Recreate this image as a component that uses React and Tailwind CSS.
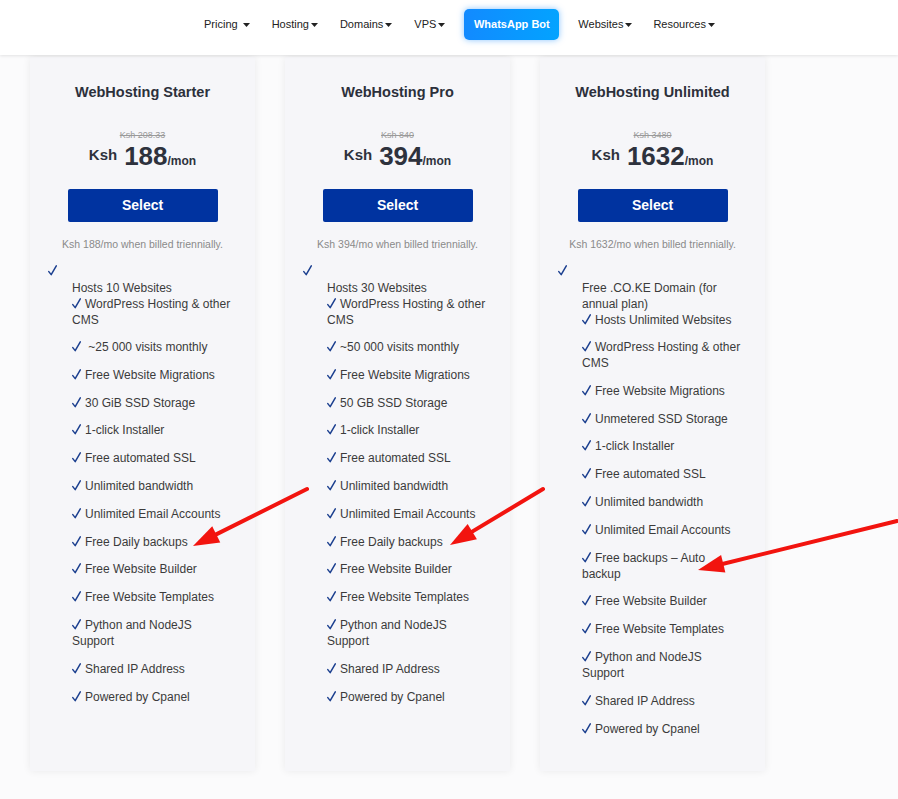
import React from 'react';

const navItems = ['Pricing', 'Hosting', 'Domains', 'VPS'];
const navItems2 = ['Websites', 'Resources'];

const plans = [
  {
    name: 'WebHosting Starter',
    old: 'Ksh 208.33',
    price: '188',
    billed: 'Ksh 188/mo when billed triennially.',
    first: ['Hosts 10 Websites', 'WordPress Hosting & other CMS'],
    features: [
      '\u00a0~25 000 visits monthly',
      'Free Website Migrations',
      '30 GiB SSD Storage',
      '1-click Installer',
      'Free automated SSL',
      'Unlimited bandwidth',
      'Unlimited Email Accounts',
      'Free Daily backups',
      'Free Website Builder',
      'Free Website Templates',
      'Python and NodeJS Support',
      'Shared IP Address',
      'Powered by Cpanel',
    ],
  },
  {
    name: 'WebHosting Pro',
    old: 'Ksh 840',
    price: '394',
    billed: 'Ksh 394/mo when billed triennially.',
    first: ['Hosts 30 Websites', 'WordPress Hosting & other CMS'],
    features: [
      '~50 000 visits monthly',
      'Free Website Migrations',
      '50 GB SSD Storage',
      '1-click Installer',
      'Free automated SSL',
      'Unlimited bandwidth',
      'Unlimited Email Accounts',
      'Free Daily backups',
      'Free Website Builder',
      'Free Website Templates',
      'Python and NodeJS Support',
      'Shared IP Address',
      'Powered by Cpanel',
    ],
  },
  {
    name: 'WebHosting Unlimited',
    old: 'Ksh 3480',
    price: '1632',
    billed: 'Ksh 1632/mo when billed triennially.',
    first: ['Free .CO.KE Domain (for annual plan)', 'Hosts Unlimited Websites'],
    features: [
      'WordPress Hosting & other CMS',
      'Free Website Migrations',
      'Unmetered SSD Storage',
      '1-click Installer',
      'Free automated SSL',
      'Unlimited bandwidth',
      'Unlimited Email Accounts',
      'Free backups \u2013 Auto backup',
      'Free Website Builder',
      'Free Website Templates',
      'Python and NodeJS Support',
      'Shared IP Address',
      'Powered by Cpanel',
    ],
  },
];

const arrows = [
  { x1: 307, y1: 489, x2: 193, y2: 546 },
  { x1: 543, y1: 489, x2: 450, y2: 545 },
  { x1: 897, y1: 521, x2: 698, y2: 570 },
];

const Caret = () => (
  <svg width="7" height="4" viewBox="0 0 7 4" className="ml-[2px] mt-[1px]">
    <path d="M0 0h7L3.5 4z" fill="#222" />
  </svg>
);

// checkmark drawn to match the thin-left / heavy-right tick of the reference
const Check = () => (
  <svg width="9" height="11" viewBox="0 0 9 11" className="inline-block align-[-1px] mr-[4px]">
    <path d="M0.8 6.6 L3.2 9.6 L8.3 0.8" fill="none" stroke="#1b3f8f" strokeWidth="1.5" strokeLinecap="round" strokeLinejoin="round" />
  </svg>
);

const Arrow = ({ x1, y1, x2, y2 }) => {
  const dx = x2 - x1;
  const dy = y2 - y1;
  const len = Math.hypot(dx, dy);
  const ux = dx / len;
  const uy = dy / len;
  const hl = 26;
  const hw = 9;
  const bx = x2 - ux * hl;
  const by = y2 - uy * hl;
  const pts = [
    [x2, y2],
    [bx - uy * hw, by + ux * hw],
    [bx + uy * hw, by - ux * hw],
  ]
    .map((p) => p.join(','))
    .join(' ');
  return (
    <g>
      <line x1={x1} y1={y1} x2={bx + ux * 4} y2={by + uy * 4} stroke="#f2140f" strokeWidth="4" strokeLinecap="round" />
      <polygon points={pts} fill="#f2140f" />
    </g>
  );
};

const PlanCard = ({ plan }) => (
  <div className="w-[225px] bg-[#f6f6f9] shadow-[0_0_8px_rgba(0,0,0,0.07)] pt-[27px] pb-[23px] flex flex-col">
    <h3 className="text-center text-[14.5px] leading-[16px] font-bold text-[#2c303b]">{plan.name}</h3>
    <div className="mt-[30px] text-center text-[9px] leading-[11px] text-[#9a9a9a] line-through">{plan.old}</div>
    <div className="text-center font-bold text-[#2e323d] leading-[28px] h-[28px]">
      <span className="text-[15px] align-[5px] mr-[7px]">Ksh</span>
      <span className="text-[26px]">{plan.price}</span>
      <span className="text-[12px]">/mon</span>
    </div>
    <button className="mx-auto mt-[20px] w-[150px] h-[33px] bg-[#0033a0] rounded-[2px] text-white text-[14px] font-bold">
      Select
    </button>
    <p className="mt-[16px] text-center text-[10.5px] leading-[12px] text-[#8a8a8a]">{plan.billed}</p>
    <div className="mt-[13px] pl-[18px] text-[12px] leading-[16px]">
      <Check />
    </div>
    <ul className="mt-[1px] pl-[42px] w-[204px] text-[12px] leading-[16px] text-[#3b3b3b]">
      <li className="mb-[11px]">
        {plan.first[0]}
        <br />
        <Check />
        {plan.first[1]}
      </li>
      {plan.features.map((f, i) => (
        <li key={i} className="mb-[11.8px]">
          <Check />
          {f}
        </li>
      ))}
    </ul>
  </div>
);

export default function App() {
  return (
    <div className="relative w-[898px] min-h-[799px] bg-[#fbfbfc] font-['Liberation_Sans',Arial,sans-serif] overflow-hidden">
      <header className="relative z-10 h-[55px] bg-white shadow-[0_1px_3px_rgba(0,0,0,0.1)] flex items-start pt-[9px] pl-[204px] text-[11px] text-[#222]">
        <nav className="flex items-center h-[31px]">
          {navItems.map((n) => (
            <a key={n} className={n === 'VPS' ? 'flex items-center mr-[19px]' : 'flex items-center mr-[22px]'}>
              {n}
              {n === 'Pricing' && <span className="w-[3px]" />}
              <Caret />
            </a>
          ))}
          <a className="mr-[19px] w-[95px] h-[31px] rounded-[5px] bg-gradient-to-r from-[#128aff] to-[#03a3ff] text-white font-bold flex items-center justify-center shadow-[0_0_6px_rgba(20,140,255,0.5)]">
            WhatsApp Bot
          </a>
          {navItems2.map((n) => (
            <a key={n} className="flex items-center mr-[21px]">
              {n}
              <Caret />
            </a>
          ))}
        </nav>
      </header>
      <main className="flex items-stretch gap-[30px] pl-[30px] mt-[2px]">
        {plans.map((p) => (
          <PlanCard key={p.name} plan={p} />
        ))}
      </main>
      <svg className="absolute inset-0 pointer-events-none" width="898" height="799">
        {arrows.map((a, i) => (
          <Arrow key={i} {...a} />
        ))}
      </svg>
    </div>
  );
}
